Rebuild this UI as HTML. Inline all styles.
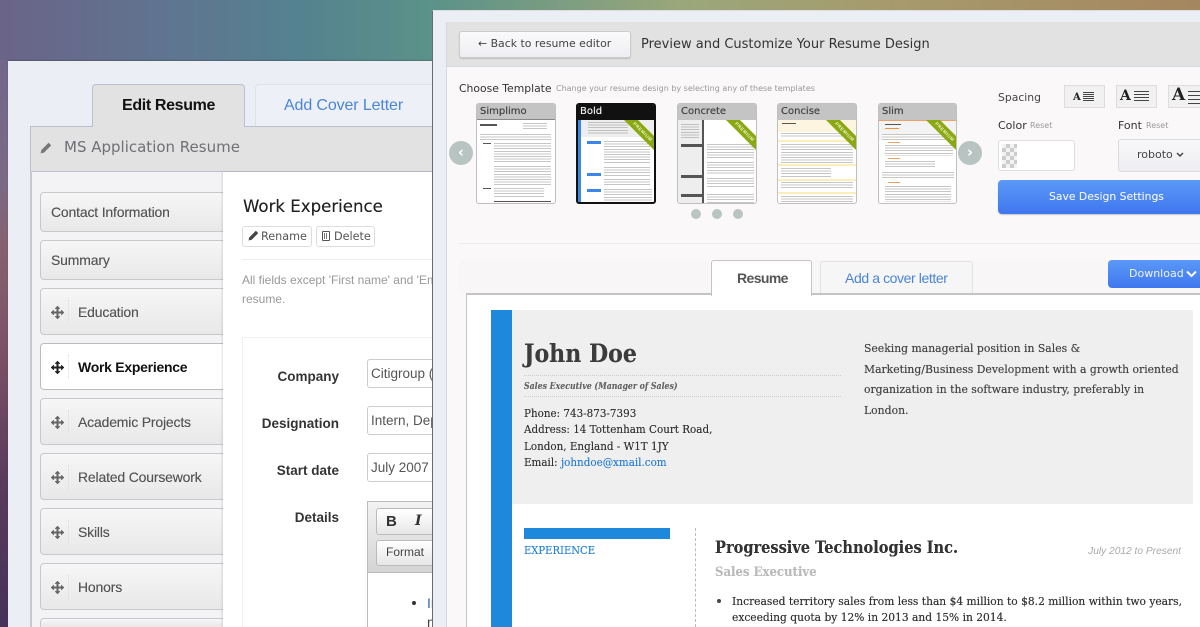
<!DOCTYPE html>
<html><head><meta charset="utf-8"><style>
*{box-sizing:border-box}
html,body{margin:0;padding:0;width:1200px;height:627px;overflow:hidden}
body{background:#555}
#root{position:relative;width:1200px;height:627px;overflow:hidden;font-family:"Liberation Sans",sans-serif;filter:blur(.3px)}
.a,.t{position:absolute}
.t{white-space:nowrap;line-height:1}
.v{font-family:"DejaVu Sans",sans-serif}
.s{font-family:"DejaVu Serif",serif;transform-origin:0 50%;text-shadow:0 0 .35px currentColor}
.item{position:absolute;left:40px;width:190px;border:1px solid #c8c8cc;border-radius:4px;background:linear-gradient(#f7f6f7,#e8e8e8)}
.it{position:absolute;white-space:nowrap;line-height:1;font-size:14px;letter-spacing:-.18px;color:#555;text-shadow:0 0 .3px #555}
.mv{position:absolute;left:51px;width:13px;height:13px}
.sep{position:absolute;left:68px;width:0;height:24px;border-left:1px dotted #ddd}
.lab{position:absolute;right:861px;white-space:nowrap;font-size:13.5px;line-height:1;font-weight:bold;color:#333}
.inp{position:absolute;left:367px;width:70px;height:29px;border:1px solid #ccc;border-radius:3px;background:#fff;font-size:13.5px;color:#555;padding:6px 0 0 3px;white-space:nowrap;overflow:hidden}
.th{position:absolute;top:103px;height:101px;border:1px solid #c0c0c0;border-radius:3px;background:#fff;overflow:hidden}
.th .h{position:absolute;left:0;top:0;right:0;height:16px;background:#c4c4c4;font:10px/16px "DejaVu Sans",sans-serif;color:#444;padding-left:3px;text-shadow:0 0 .4px #444}
.l{position:absolute;background:repeating-linear-gradient(#c6c6c6 0 1px,#fff 1px 2.6px)}
.k{position:absolute;background:#555}
.dot{position:absolute;top:209px;width:10px;height:10px;border-radius:50%;background:#b9c5c2}
.circ{position:absolute;top:141px;width:24px;height:24px;border-radius:50%;background:#b8c4c1;color:#fff;text-align:center;font:bold 15px/22px "DejaVu Sans",sans-serif}
.sp{position:absolute;top:85px;height:23px;border:1px solid #ddd;background:#f1f1f1}
</style></head><body><div id="root">
<svg width="0" height="0" style="position:absolute"><defs>
<symbol id="mv" viewBox="0 0 13 13"><path d="M6.5 0L9 2.6H7.3V5.7H10.4V4L13 6.5 10.4 9V7.3H7.3V10.4H9L6.5 13 4 10.4H5.7V7.3H2.6V9L0 6.5 2.6 4V5.7H5.7V2.6H4Z" fill="currentColor" stroke="currentColor" stroke-width=".5"/></symbol>
<symbol id="pen" viewBox="0 0 12 12"><path d="M8.6 0.8L11.2 3.4 4 10.6 0.6 11.4 1.4 8Z" fill="currentColor"/></symbol>
<symbol id="rb" viewBox="0 0 30 30"><polygon points="0,0 14,0 30,16 30,30" fill="#8aa812"/><text x="0" y="0" transform="translate(8.7,3.9) rotate(45)" font-family="Liberation Sans" font-weight="bold" font-size="4.6" fill="#eef4cc" letter-spacing=".5">PREMIUM</text></symbol>
</defs></svg>

<!-- background -->
<div class="a" style="inset:0;background:linear-gradient(90deg,#6a6488 0,#5f7590 170px,#548290 300px,#5b9289 432px,#9aa77a 680px,#a79a6c 900px,#a5865f 1200px)"></div>
<div class="a" style="left:0;top:60px;width:9px;height:567px;background:linear-gradient(#72668a 0,#7b6a85 120px,#86606f 190px,#7a4f66 300px,#5a3a5c 420px,#46325a 567px)"></div>

<!-- LEFT PANEL -->
<div class="a" style="left:8px;top:61px;width:426px;height:566px;background:#eceef6;box-shadow:0 -1px 1px rgba(60,60,60,.35)"></div>
<div class="a" style="left:92px;top:84px;width:153px;height:43px;background:#e2e2e2;border:1px solid #bcc0cc;border-bottom:0;border-radius:4px 4px 0 0;z-index:3"></div>
<div class="a" style="left:255px;top:84px;width:185px;height:43px;background:#eef0f8;border:1px solid #dfe2ec;border-bottom:0;border-radius:4px 4px 0 0"></div>
<div class="a" style="left:30px;top:126px;width:410px;height:46px;background:#e2e2e2;border:1px solid #bcc0cc"></div>
<div class="a" style="left:30px;top:171px;width:2px;height:456px;background:#c6c8d2"></div>
<div class="a" style="left:32px;top:172px;width:192px;height:455px;background:#f3f3f5"></div>
<div class="t" style="left:122px;top:98px;font-size:16px;letter-spacing:-.35px;font-weight:bold;color:#111;z-index:4">Edit Resume</div>
<div class="t" style="left:284px;top:98px;font-size:16px;letter-spacing:-.12px;color:#4a86d8">Add Cover Letter</div>
<svg class="a" style="left:40px;top:142px;color:#777" width="12" height="12"><use href="#pen"/></svg>
<div class="t v" style="left:64px;top:140px;font-size:15px;color:#6f6f76">MS Application Resume</div>

<div class="item" style="top:192px;height:40px"></div>
<div class="item" style="top:240px;height:40px"></div>
<div class="item" style="top:288px;height:47px"></div>
<div class="item" style="top:343px;height:47px;background:#fff;border-color:#bbb"></div>
<div class="item" style="top:398px;height:47px"></div>
<div class="item" style="top:453px;height:47px"></div>
<div class="item" style="top:508px;height:47px"></div>
<div class="item" style="top:563px;height:47px"></div>
<div class="item" style="top:618px;height:9px;border-bottom:0;border-radius:4px 4px 0 0"></div>
<div class="a" style="left:223px;top:172px;width:217px;height:455px;background:#fff;box-shadow:-1px 0 2px rgba(0,0,0,.12)"></div>

<div class="it" style="left:51px;top:205px">Contact Information</div>
<div class="it" style="left:51px;top:253px">Summary</div>
<svg class="mv" style="top:306px;color:#666"><use href="#mv"/></svg><div class="sep" style="top:300px"></div><div class="it" style="left:78px;top:305px">Education</div>
<svg class="mv" style="top:361px;color:#222"><use href="#mv"/></svg><div class="sep" style="top:355px"></div><div class="it" style="left:78px;top:360px;font-weight:bold;color:#111;text-shadow:none;letter-spacing:-.27px">Work Experience</div>
<svg class="mv" style="top:416px;color:#666"><use href="#mv"/></svg><div class="sep" style="top:410px"></div><div class="it" style="left:78px;top:415px">Academic Projects</div>
<svg class="mv" style="top:471px;color:#666"><use href="#mv"/></svg><div class="sep" style="top:465px"></div><div class="it" style="left:78px;top:470px">Related Coursework</div>
<svg class="mv" style="top:526px;color:#666"><use href="#mv"/></svg><div class="sep" style="top:520px"></div><div class="it" style="left:78px;top:525px">Skills</div>
<svg class="mv" style="top:581px;color:#666"><use href="#mv"/></svg><div class="sep" style="top:575px"></div><div class="it" style="left:78px;top:580px">Honors</div>

<div class="t v" style="left:243px;top:199px;font-size:16.6px;color:#222;text-shadow:0 0 .3px #222">Work Experience</div>
<div class="a" style="left:242px;top:226px;width:70px;height:21px;border:1px solid #ddd;border-radius:3px"></div>
<div class="a" style="left:316px;top:226px;width:59px;height:21px;border:1px solid #ddd;border-radius:3px"></div>
<svg class="a" style="left:248px;top:230px;color:#444" width="11" height="11"><use href="#pen"/></svg>
<div class="t v" style="left:261px;top:231px;font-size:11.2px;color:#555">Rename</div>
<div class="a" style="left:322px;top:231px;width:8px;height:10px;border:1px solid #555;border-radius:1px"></div>
<div class="a" style="left:324px;top:233px;width:4px;height:6px;background:repeating-linear-gradient(90deg,#777 0 1px,#fff 1px 2px)"></div>
<div class="t v" style="left:334px;top:231px;font-size:11.2px;color:#555">Delete</div>
<div class="a" style="left:242px;top:259px;width:190px;height:1px;background:#eee"></div>
<div class="t" style="left:242px;top:274px;font-size:12px;color:#999">All fields except 'First name' and 'Em</div>
<div class="t" style="left:242px;top:293px;font-size:12px;color:#999">resume.</div>
<div class="a" style="left:242px;top:337px;width:195px;height:290px;border:1px solid #f0f0f0;border-bottom:0"></div>
<div class="lab" style="top:370px">Company</div>
<div class="lab" style="top:417px">Designation</div>
<div class="lab" style="top:464px">Start date</div>
<div class="lab" style="top:511px">Details</div>
<div class="inp" style="top:359px">Citigroup (</div>
<div class="inp" style="top:406px">Intern, Dep</div>
<div class="inp" style="top:453px">July 2007</div>
<div class="a" style="left:367px;top:501px;width:70px;height:126px;border:1px solid #bbb;border-bottom:0;background:#fff"></div>
<div class="a" style="left:368px;top:502px;width:68px;height:71px;background:linear-gradient(#f2f2f2,#d4d4d4);border-bottom:1px solid #bbb"></div>
<div class="a" style="left:376px;top:508px;width:60px;height:27px;border:1px solid #bbb;border-radius:3px;background:linear-gradient(#fff,#e6e6e6)"></div>
<div class="a" style="left:376px;top:540px;width:60px;height:26px;border:1px solid #bbb;border-radius:3px;background:linear-gradient(#fff,#e6e6e6)"></div>
<div class="t" style="left:386px;top:514px;font-size:15px;font-weight:bold;color:#333">B</div>
<div class="t" style="left:415px;top:514px;font-family:'DejaVu Serif',serif;font-size:14px;font-weight:bold;font-style:italic;color:#333">I</div>
<div class="t" style="left:386px;top:546px;font-size:12px;color:#444">Format</div>
<div class="a" style="left:412px;top:601px;width:4px;height:4px;border-radius:50%;background:#333"></div>
<div class="t" style="left:427px;top:596px;width:5px;overflow:hidden;font-size:14px;color:#3366aa">In</div>
<div class="t" style="left:427px;top:615px;width:5px;overflow:hidden;font-size:14px;color:#444">n</div>

<!-- RIGHT PANEL -->
<div class="a" style="left:432px;top:10px;width:768px;height:617px;background:#eceef6;border-left:1px solid #6a6a70;border-top:1px solid #ddd"></div>
<div class="a" style="left:446px;top:22px;width:754px;height:605px;background:#faf8f8;border-left:1px solid #d8d8dc"></div>
<div class="a" style="left:446px;top:22px;width:754px;height:45px;background:#e2e2e2;border-bottom:1px solid #d6d8e0;border-left:1px solid #d8d8dc"></div>
<div class="a" style="left:459px;top:31px;width:172px;height:27px;border:1px solid #ccc;border-radius:3px;background:linear-gradient(#fafafc,#eeeef2);box-shadow:0 1px 1px rgba(0,0,0,.15)"></div>
<div class="t v" style="left:478px;top:39px;font-size:10.9px;color:#444">← Back to resume editor</div>
<div class="t v" style="left:641px;top:38px;font-size:13px;color:#333">Preview and Customize Your Resume Design</div>
<div class="t v" style="left:459px;top:84px;font-size:10.8px;color:#333">Choose Template</div>
<div class="t v" style="left:556px;top:85px;font-size:8px;color:#999">Change your resume design by selecting any of these templates</div>

<!-- thumbs -->
<div class="th" style="left:476px;width:80px">
  <div class="h" style="border-bottom:1px solid #888">Simplimo</div>
  <div class="k" style="left:3px;top:20px;width:17px;height:2px"></div>
  <div class="l" style="left:46px;top:19px;width:24px;height:8px"></div>
  <div class="l" style="left:3px;top:30px;width:71px;height:6px"></div>
  <div class="k" style="left:6px;top:39px;width:8px;height:1px"></div>
  <div class="l" style="left:17px;top:39px;width:57px;height:20px"></div>
  <div class="l" style="left:17px;top:62px;width:57px;height:20px"></div>
  <div class="k" style="left:6px;top:84px;width:8px;height:1px"></div>
  <div class="l" style="left:17px;top:84px;width:50px;height:10px"></div>
  <div class="k" style="left:17px;top:97px;width:57px;height:1px"></div>
</div>
<div class="th" style="left:576px;width:80px;border:2px solid #111">
  <div class="h" style="background:#111;color:#eee;height:15px;line-height:14px;padding-left:2px;text-shadow:0 0 .4px #eee">Bold</div>
  <div class="a" style="left:0;top:15px;width:3px;height:84px;background:#3c86e6"></div>
  <div class="a" style="left:3px;top:15px;width:73px;height:17px;background:#eee"></div>
  <div class="l" style="left:10px;top:17px;width:40px;height:13px;background:repeating-linear-gradient(#c0c0c0 0 1px,#eee 1px 2.6px)"></div>
  <div class="a" style="left:9px;top:36px;width:14px;height:3px;background:#3c86e6"></div>
  <div class="l" style="left:26px;top:36px;width:46px;height:22px"></div>
  <div class="l" style="left:26px;top:62px;width:46px;height:10px"></div>
  <div class="a" style="left:9px;top:68px;width:14px;height:3px;background:#3c86e6"></div>
  <div class="a" style="left:9px;top:84px;width:14px;height:3px;background:#3c86e6"></div>
  <div class="l" style="left:26px;top:74px;width:46px;height:8px"></div>
  <div class="l" style="left:26px;top:84px;width:48px;height:14px"></div>
  <svg class="a" style="left:46px;top:15px" width="30" height="30"><use href="#rb"/></svg>
</div>
<div class="th" style="left:677px;width:80px">
  <div class="h">Concrete</div>
  <div class="a" style="left:0;top:16px;width:24px;height:84px;background:#eee"></div>
  <div class="a" style="left:24px;top:16px;width:2px;height:84px;background:#555"></div>
  <div class="l" style="left:3px;top:20px;width:18px;height:14px;background:repeating-linear-gradient(#c0c0c0 0 1px,#eee 1px 2.6px)"></div>
  <div class="k" style="left:3px;top:40px;width:21px;height:3px"></div>
  <div class="k" style="left:3px;top:71px;width:21px;height:3px"></div>
  <div class="k" style="left:3px;top:90px;width:21px;height:3px"></div>
  <div class="l" style="left:29px;top:40px;width:47px;height:14px"></div>
  <div class="l" style="left:29px;top:58px;width:47px;height:12px"></div>
  <div class="l" style="left:29px;top:74px;width:47px;height:10px"></div>
  <div class="l" style="left:29px;top:90px;width:47px;height:9px"></div>
  <svg class="a" style="left:48px;top:16px" width="30" height="30"><use href="#rb"/></svg>
</div>
<div class="th" style="left:777px;width:80px">
  <div class="h">Concise</div>
  <div class="a" style="left:0;top:16px;width:78px;height:12px;background:#fdf5e0"></div>
  <div class="k" style="left:4px;top:19px;width:14px;height:1px"></div>
  <div class="l" style="left:3px;top:29px;width:72px;height:5px"></div>
  <div class="a" style="left:0;top:36px;width:78px;height:2px;background:#fbeeb8"></div>
  <div class="l" style="left:3px;top:40px;width:72px;height:19px"></div>
  <div class="a" style="left:0;top:60px;width:78px;height:2px;background:#fbeeb8"></div>
  <div class="l" style="left:3px;top:64px;width:50px;height:9px"></div>
  <div class="a" style="left:0;top:75px;width:78px;height:2px;background:#fbeeb8"></div>
  <div class="l" style="left:3px;top:78px;width:72px;height:7px"></div>
  <div class="a" style="left:0;top:88px;width:78px;height:2px;background:#fbeeb8"></div>
  <div class="l" style="left:3px;top:92px;width:72px;height:7px"></div>
  <svg class="a" style="left:48px;top:16px" width="30" height="30"><use href="#rb"/></svg>
</div>
<div class="th" style="left:878px;width:79px">
  <div class="h">Slim</div>
  <div class="a" style="left:0;top:16px;width:77px;height:1px;background:#f0a060"></div>
  <div class="a" style="left:0;top:17px;width:77px;height:19px;background:#f3f3f3"></div>
  <div class="k" style="left:6px;top:20px;width:16px;height:1px"></div>
  <div class="a" style="left:6px;top:24px;width:14px;height:1px;background:#f09040"></div>
  <div class="l" style="left:3px;top:30px;width:72px;height:6px"></div>
  <div class="a" style="left:9px;top:38px;width:12px;height:1px;background:#f0a060"></div>
  <div class="l" style="left:6px;top:41px;width:68px;height:11px"></div>
  <div class="a" style="left:9px;top:54px;width:12px;height:1px;background:#f0a060"></div>
  <div class="l" style="left:6px;top:57px;width:50px;height:7px"></div>
  <div class="l" style="left:3px;top:68px;width:72px;height:8px"></div>
  <div class="a" style="left:9px;top:78px;width:12px;height:1px;background:#f0a060"></div>
  <div class="l" style="left:6px;top:82px;width:66px;height:16px"></div>
  <svg class="a" style="left:47px;top:16px" width="30" height="30"><use href="#rb"/></svg>
</div>
<div class="circ" style="left:449px">‹</div>
<div class="circ" style="left:958px">›</div>
<div class="dot" style="left:691px"></div><div class="dot" style="left:712px"></div><div class="dot" style="left:733px"></div>

<!-- controls -->
<div class="t v" style="left:998px;top:93px;font-size:10.8px;color:#444">Spacing</div>
<div class="sp" style="left:1064px;width:41px"></div>
<div class="t" style="left:1073px;top:93px;font-family:'DejaVu Serif',serif;font-size:10px;font-weight:bold;color:#222">A</div>
<div class="a" style="left:1083px;top:92px;width:11px;height:10px;background:repeating-linear-gradient(#444 0 1px,#f1f1f1 1px 2px)"></div>
<div class="sp" style="left:1116px;width:41px"></div>
<div class="t" style="left:1120px;top:89px;font-family:'DejaVu Serif',serif;font-size:14px;font-weight:bold;color:#222">A</div>
<div class="a" style="left:1134px;top:91px;width:15px;height:11px;background:repeating-linear-gradient(#444 0 1px,#f1f1f1 1px 3px)"></div>
<div class="sp" style="left:1168px;width:40px"></div>
<div class="t" style="left:1172px;top:87px;font-family:'DejaVu Serif',serif;font-size:17px;font-weight:bold;color:#222">A</div>
<div class="a" style="left:1188px;top:91px;width:12px;height:13px;background:repeating-linear-gradient(#444 0 1px,#f1f1f1 1px 4px)"></div>
<div class="t v" style="left:998px;top:120px;font-size:11px;color:#333">Color</div>
<div class="t v" style="left:1030px;top:122px;font-size:8px;color:#999">Reset</div>
<div class="t v" style="left:1118px;top:120px;font-size:11px;color:#333">Font</div>
<div class="t v" style="left:1146px;top:122px;font-size:8px;color:#999">Reset</div>
<div class="a" style="left:998px;top:140px;width:77px;height:31px;background:#fff;border:1px solid #ddd;border-radius:3px"></div>
<div class="a" style="left:1002px;top:144px;width:15px;height:24px;background:conic-gradient(#ccc 25%,#f2f2f2 0 50%,#ccc 0 75%,#f2f2f2 0) 0 0/8px 8px"></div>
<div class="a" style="left:1118px;top:139px;width:90px;height:33px;background:linear-gradient(#f8f8fa,#eeeef2);border:1px solid #ddd;border-radius:3px"></div>
<div class="t v" style="left:1137px;top:149px;font-size:11px;color:#444">roboto</div>
<svg class="a" style="left:1176px;top:152px" width="8" height="6"><path d="M1 1L4 4 7 1" fill="none" stroke="#444" stroke-width="1.5"/></svg>
<div class="a" style="left:998px;top:180px;width:210px;height:34px;background:linear-gradient(#5b98f7,#3f77ef);border-radius:4px;box-shadow:0 1px 1px rgba(0,0,0,.2)"></div>
<div class="t v" style="left:1049px;top:192px;font-size:10.8px;color:#eef3ff;text-shadow:0 0 .3px #eef3ff">Save Design Settings</div>
<div class="a" style="left:459px;top:243px;width:741px;height:1px;background:#eeecec"></div>

<!-- tabs -->
<div class="a" style="left:459px;top:260px;width:741px;height:34px;background:#f8f6f6"></div>
<div class="a" style="left:820px;top:261px;width:153px;height:34px;background:#f6f6f6;border:1px solid #e2e2e6;border-bottom:0;border-radius:3px 3px 0 0"></div>
<div class="t" style="left:845px;top:271px;font-size:14px;letter-spacing:-.4px;color:#4a84d8">Add a cover letter</div>
<div class="a" style="left:466px;top:293px;width:734px;height:334px;background:#fff;border-top:2px solid #c4c4c4;border-left:1px solid #c4c4c4"></div>
<div class="a" style="left:711px;top:260px;width:101px;height:36px;background:#fff;border:1px solid #c4c4c4;border-bottom:0;border-radius:3px 3px 0 0"></div>
<div class="t" style="left:737px;top:271px;font-size:14px;letter-spacing:-.6px;font-weight:bold;color:#555">Resume</div>
<div class="a" style="left:1108px;top:260px;width:100px;height:28px;background:linear-gradient(#5b98f7,#3f77ef);border-radius:4px"></div>
<div class="t v" style="left:1129px;top:268px;font-size:11px;color:#eef3ff">Download</div>
<svg class="a" style="left:1186px;top:270px" width="11" height="8"><path d="M1 1.5L5.5 6 10 1.5" fill="none" stroke="#fff" stroke-width="2"/></svg>

<!-- resume -->
<div class="a" style="left:491px;top:310px;width:21px;height:317px;background:#1e88dc"></div>
<div class="a" style="left:512px;top:310px;width:681px;height:194px;background:#efefef"></div>
<div class="t s" style="left:524px;top:341px;font-size:25px;font-weight:bold;color:#3c3c3c;transform:scaleX(.883)">John Doe</div>
<div class="a" style="left:524px;top:375px;width:317px;border-top:1px dotted #ccc"></div>
<div class="t s" style="left:524px;top:382px;font-size:9.5px;font-weight:bold;font-style:italic;color:#666;transform:scaleX(.82)">Sales Executive (Manager of Sales)</div>
<div class="a" style="left:524px;top:396px;width:317px;border-top:1px dotted #ccc"></div>
<div class="t s" style="left:524px;top:408px;font-size:11.5px;color:#333;transform:scaleX(.9)">Phone: 743-873-7393</div>
<div class="t s" style="left:524px;top:424px;font-size:11.5px;color:#333;transform:scaleX(.9)">Address: 14 Tottenham Court Road,</div>
<div class="t s" style="left:524px;top:441px;font-size:11.5px;color:#333;transform:scaleX(.9)">London, England - W1T 1JY</div>
<div class="t s" style="left:524px;top:457px;font-size:11.5px;color:#333;transform:scaleX(.9)">Email: <span style="color:#2a7fd4">johndoe@xmail.com</span></div>
<div class="t s" style="left:864px;top:343px;font-size:11.5px;color:#444;transform:scaleX(.94)">Seeking managerial position in Sales &amp;</div>
<div class="t s" style="left:864px;top:364px;font-size:11.5px;color:#444;transform:scaleX(.94)">Marketing/Business Development with a growth oriented</div>
<div class="t s" style="left:864px;top:384px;font-size:11.5px;color:#444;transform:scaleX(.94)">organization in the software industry, preferably in</div>
<div class="t s" style="left:864px;top:405px;font-size:11.5px;color:#444;transform:scaleX(.94)">London.</div>
<div class="a" style="left:524px;top:528px;width:146px;height:11px;background:#1e88dc"></div>
<div class="t s" style="left:524px;top:545px;font-size:11px;color:#2a85d8;transform:scaleX(.91)">EXPERIENCE</div>
<div class="a" style="left:695px;top:528px;height:99px;border-left:1px dashed #bbb"></div>
<div class="t s" style="left:715px;top:540px;font-size:17px;font-weight:bold;color:#333;transform:scaleX(.856)">Progressive Technologies Inc.</div>
<div class="t s" style="left:715px;top:566px;font-size:13px;font-weight:bold;color:#bbb;transform:scaleX(.9)">Sales Executive</div>
<div class="t" style="right:19px;top:547px;font-size:10.2px;font-style:italic;color:#aaa">July 2012 to Present</div>
<div class="a" style="left:717px;top:599px;width:4px;height:4px;border-radius:50%;background:#444"></div>
<div class="t s" style="left:732px;top:596px;font-size:11px;color:#333;transform:scaleX(.97)">Increased territory sales from less than $4 million to $8.2 million within two years,</div>
<div class="t s" style="left:732px;top:612px;font-size:11px;color:#333;transform:scaleX(.97)">exceeding quota by 12% in 2013 and 15% in 2014.</div>
</div></body></html>
